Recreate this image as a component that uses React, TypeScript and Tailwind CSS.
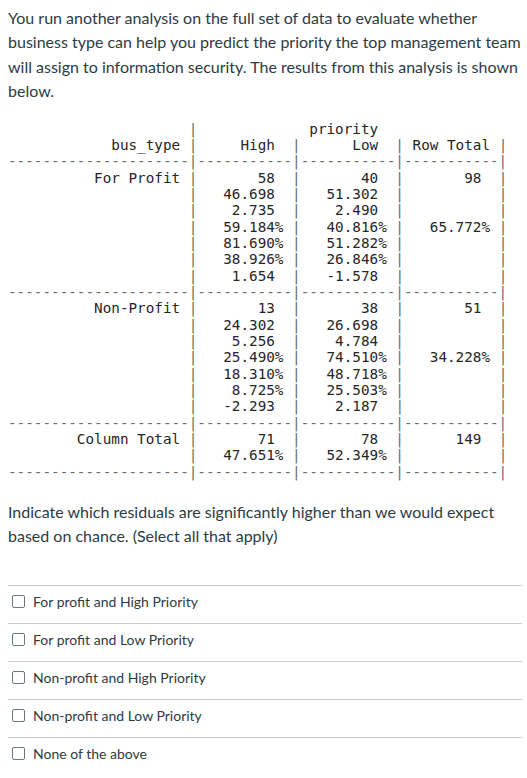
import React from "react";

const cell = (v: string) => {
  const pct = v.endsWith("%");
  const num = pct ? v.slice(0, -1) : v;
  return num.padStart(9) + (pct ? "%" : " ") + " |";
};

const row = (label: string, a: string, b: string, c: string) =>
  label.padStart(20) + " |" + cell(a) + cell(b) + cell(c);

const dash = "-".repeat(21) + "|" + ("-".repeat(11) + "|").repeat(3);

const lines = [
  " ".repeat(21) + "|" + " ".repeat(13) + "priority",
  "bus_type".padStart(20) + " |" + "High".padStart(9) + "  |" + "Low".padStart(9) + "  |" + " Row Total |",
  dash,
  row("For Profit", "58", "40", "98"),
  row("", "46.698", "51.302", ""),
  row("", "2.735", "2.490", ""),
  row("", "59.184%", "40.816%", "65.772%"),
  row("", "81.690%", "51.282%", ""),
  row("", "38.926%", "26.846%", ""),
  row("", "1.654", "-1.578", ""),
  dash,
  row("Non-Profit", "13", "38", "51"),
  row("", "24.302", "26.698", ""),
  row("", "5.256", "4.784", ""),
  row("", "25.490%", "74.510%", "34.228%"),
  row("", "18.310%", "48.718%", ""),
  row("", "8.725%", "25.503%", ""),
  row("", "-2.293", "2.187", ""),
  dash,
  row("Column Total", "71", "78", "149"),
  row("", "47.651%", "52.349%", ""),
  dash,
];

const answers = [
  "For profit and High Priority",
  "For profit and Low Priority",
  "Non-profit and High Priority",
  "Non-profit and Low Priority",
  "None of the above",
];

// split a table line so the rule characters can be drawn lighter
const TableLine = ({ text }: { text: string }) => {
  const parts = text.split(/([-|]+)/).filter((p) => p.length > 0);
  return (
    <div className="h-[16.33px] leading-[16.33px] whitespace-pre">
      {parts.map((p, i) =>
        /^[-|]+$/.test(p) && p !== "-" ? (
          <span key={i} className="text-[#6b6b6b]">
            {p}
          </span>
        ) : (
          <span key={i}>{p}</span>
        )
      )}
    </div>
  );
};

const App = () => {
  return (
    <div className="w-[527px] min-h-[778px] bg-white pl-2 pr-[5px] pt-[6px] font-['Lato','Noto_Sans',sans-serif] text-[#2d3b45]">
      <p className="text-[16px] leading-[24.4px]">
        You run another analysis on the full set of data to evaluate whether
        business type can help you predict the priority the top management team
        will assign to information security. The results from this analysis is
        shown below.
      </p>

      <div className="mt-[17px] font-['DejaVu_Sans_Mono',monospace] text-[14.3px] text-[#262626]">
        {lines.map((l, i) => (
          <TableLine key={i} text={l} />
        ))}
      </div>

      <p className="mt-[20px] text-[16px] leading-[24.4px]">
        Indicate which residuals are significantly higher than we would expect
        based on chance. (Select all that apply)
      </p>

      <div className="mt-[36px]">
        {answers.map((a) => (
          <label
            key={a}
            className="flex items-center gap-2 border-t border-[#c7cdd1] pl-1 pt-[7px] pb-[13px] text-[14px] leading-[17px]"
          >
            <span className="w-[13px] h-[13px] shrink-0 rounded-[2px] border border-[#6b7780] bg-white" />
            <span>{a}</span>
          </label>
        ))}
      </div>
    </div>
  );
};

export default App;
